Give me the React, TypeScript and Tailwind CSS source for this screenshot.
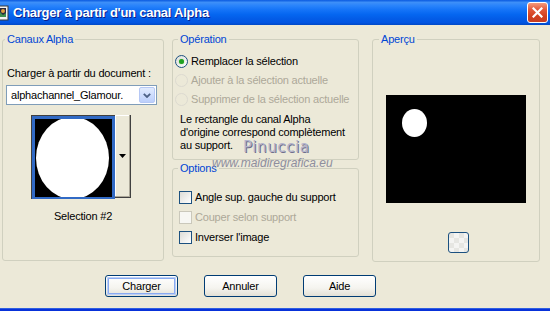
import React from 'react';

function TitleIcon() {
  return (
    <svg width="9" height="16" viewBox="7 0 9 16" className="shrink-0">
      <rect x="1" y="1" width="14" height="14" fill="#f4f4f4" stroke="#3a3a3a" />
      <rect x="3" y="3" width="10" height="9" fill="#2a2a40" />
      <circle cx="10" cy="6" r="2" fill="#e0a040" />
      <path d="M3 12 L7 7 L10 10 L13 8 L13 12 Z" fill="#3f8f4f" />
    </svg>
  );
}

function CloseButton() {
  return (
    <div className="mr-[2px] flex h-[21px] w-[21px] items-center justify-center rounded-[3px] border border-white bg-[linear-gradient(to_bottom,#f39a7c_0%,#e2593a_35%,#d1401f_70%,#c73e23_100%)]">
      <svg width="11" height="11" viewBox="0 0 11 11">
        <path d="M1.5 1.5 L9.5 9.5 M9.5 1.5 L1.5 9.5" stroke="#fff" strokeWidth="2.2" strokeLinecap="square" />
      </svg>
    </div>
  );
}

function Radio({ checked, disabled, label }: { checked?: boolean; disabled?: boolean; label: string }) {
  return (
    <div className="flex h-[19px] items-center">
      <div
        className={
          'ml-[2px] flex h-[13px] w-[13px] items-center justify-center rounded-full border ' +
          (disabled
            ? 'border-[#dcdad0] bg-[#ece9d8]'
            : 'border-[#1c5180] bg-[linear-gradient(135deg,#dcdcd7,#ffffff)]')
        }
      >
        {checked && <div className="h-[5px] w-[5px] rounded-full bg-[#21a121] shadow-[0_0_1px_#6cd06c]" />}
      </div>
      <span className={'ml-[3px] ' + (disabled ? 'text-[#aca899]' : 'text-black')}>{label}</span>
    </div>
  );
}

function Check({ disabled, label }: { disabled?: boolean; label: string }) {
  return (
    <div className="flex h-[20px] items-center">
      <div
        className={
          'ml-[6px] h-[13px] w-[13px] border ' +
          (disabled
            ? 'border-[#cac8bb] bg-[#f7f7f3]'
            : 'border-[#1c5180] bg-[linear-gradient(135deg,#dcdcd7,#ffffff)]')
        }
      />
      <span className={'ml-[3px] ' + (disabled ? 'text-[#aca899]' : 'text-black')}>{label}</span>
    </div>
  );
}

function XPButton({ label, isDefault }: { label: string; isDefault?: boolean }) {
  return (
    <div className="h-[22px] w-[73px] rounded-[3px] border border-[#003c74] bg-[linear-gradient(to_bottom,#ffffff_0%,#f5f4ef_60%,#e3e1d6_100%)] p-[1px]">
      <div
        className={
          'flex h-full w-full items-center justify-center rounded-[2px] ' +
          (isDefault ? 'shadow-[inset_0_0_0_1px_#bcd0f7,inset_0_0_0_2px_#8aaaf0]' : '')
        }
      >
        {label}
      </div>
    </div>
  );
}

export default function App() {
  return (
    <div className="relative flex h-[311px] w-[550px] flex-col overflow-hidden bg-[#ece9d8] font-['Liberation_Sans',Arial,sans-serif] text-[11px] leading-[13px] tracking-[-0.2px] text-black">
      {/* title bar */}
      <div className="flex h-[25px] shrink-0 items-center bg-[linear-gradient(to_bottom,#0a5ae0_0%,#3d8ff8_10%,#2a84fb_22%,#1473f7_40%,#0566f0_58%,#035ce7_75%,#0255e2_90%,#0149c6_100%)]">
        <TitleIcon />
        <span className="ml-[4px] text-[13px] font-bold tracking-[-0.25px] text-white [text-shadow:1px_1px_#0a1e8c]">
          Charger à partir d'un canal Alpha
        </span>
        <div className="flex-1" />
        <CloseButton />
      </div>

      <div className="flex flex-1 flex-col px-[2px] pt-[8px]">
        <div className="flex">
          {/* Canaux Alpha */}
          <fieldset className="h-[228px] w-[162px] rounded-[3px] border border-[#d0d0bf]">
            <legend className="ml-[2px] px-[2px] text-[#0046d5]">Canaux Alpha</legend>
            <div className="flex flex-col">
              <div className="ml-[4px] mt-[21px]">Charger à partir du document :</div>
              <div className="ml-[3px] mt-[5px] flex h-[20px] w-[151px] items-center border border-[#7f9db9] bg-white">
                <span className="ml-[4px] flex-1">alphachannel_Glamour.</span>
                <div className="mr-[1px] flex h-[16px] w-[16px] items-center justify-center rounded-[2px] border border-[#b6c8f5] bg-[linear-gradient(to_bottom,#e1ebfe,#bccffb)]">
                  <svg width="8" height="5" viewBox="0 0 8 5">
                    <path d="M0.8 0.8 L4 4 L7.2 0.8" fill="none" stroke="#4d6185" strokeWidth="1.8" />
                  </svg>
                </div>
              </div>
              <div className="ml-[28px] mt-[10px] flex h-[84px] w-[100px]">
                <div className="flex h-full w-[84px] border-l border-t border-[#404040] bg-[#316ac5] p-[3px] pb-[2px]">
                  <div className="relative h-full w-full overflow-hidden bg-black">
                    <div className="absolute left-[1px] top-[-2px] h-[82px] w-[73px] rounded-[50%] bg-white" />
                  </div>
                </div>
                <div className="flex h-[83px] w-[16px] items-center justify-center border-b border-r border-[#404040] bg-[#ece9d8] shadow-[inset_-1px_-1px_#aca899,inset_1px_1px_#ffffff]">
                  <svg width="7" height="4" viewBox="0 0 7 4">
                    <path d="M0 0 H7 L3.5 4 Z" fill="#000" />
                  </svg>
                </div>
              </div>
              <div className="mt-[11px] text-center">Selection #2</div>
            </div>
          </fieldset>

          {/* middle column */}
          <div className="ml-[8px] flex w-[187px] flex-col">
            <fieldset className="h-[127px] rounded-[3px] border border-[#d0d0bf]">
              <legend className="ml-[5px] px-[2px] text-[#0046d5]">Opération</legend>
              <div className="mt-[6px] flex flex-col">
                <Radio checked label="Remplacer la sélection" />
                <Radio disabled label="Ajouter à la sélection actuelle" />
                <Radio disabled label="Supprimer de la sélection actuelle" />
                <div className="ml-[7px] mt-[4px]">
                  Le rectangle du canal Alpha
                  <br />
                  d'origine correspond complètement
                  <br />
                  au support.
                </div>
              </div>
            </fieldset>
            <fieldset className="mt-[2px] h-[95px] rounded-[3px] border border-[#d0d0bf]">
              <legend className="ml-[5px] px-[2px] text-[#0046d5]">Options</legend>
              <div className="mt-[12px] flex flex-col">
                <Check label="Angle sup. gauche du support" />
                <Check disabled label="Couper selon support" />
                <Check label="Inverser l'image" />
              </div>
            </fieldset>
          </div>

          {/* Aperçu */}
          <fieldset className="ml-[13px] h-[229px] w-[168px] rounded-[3px] border border-[#d0d0bf]">
            <legend className="ml-[6px] px-[2px] text-[#0046d5]">Aperçu</legend>
            <div className="flex flex-col">
              <div className="relative ml-[13px] mt-[49px] h-[108px] w-[140px] bg-black">
                <div className="absolute left-[16px] top-[14px] h-[28px] w-[25px] rounded-[50%] bg-white" />
              </div>
              <div className="ml-[75px] mt-[29px] h-[21px] w-[21px] rounded-[3px] border border-[#1c5180] bg-[conic-gradient(#f4f4f2_25%,#e6e6e2_0_50%,#f4f4f2_0_75%,#e6e6e2_0)] bg-[length:10px_10px]" />
            </div>
          </fieldset>
        </div>

        {/* buttons */}
        <div className="mt-[13px] flex gap-[26px] pl-[103px]">
          <XPButton label="Charger" isDefault />
          <XPButton label="Annuler" />
          <XPButton label="Aide" />
        </div>
        <div className="flex-1" />
      </div>
      <div className="h-[3px] shrink-0 border-t border-[#2f5fe0] bg-[#0831d9]" />

      {/* watermark */}
      <div className="pointer-events-none absolute left-[243px] top-[140px] font-['DejaVu_Sans',sans-serif] text-[15px] leading-[14px] tracking-[0.6px] text-[#b4b4cc] [text-shadow:1px_1px_0_#6e6e8c]">
        Pinuccia
      </div>
      <div className="pointer-events-none absolute left-[212px] top-[157px] text-[12px] italic leading-[12px] tracking-[0px] text-[#8e8e9e]">
        www.maidiregrafica.eu
      </div>
    </div>
  );
}
